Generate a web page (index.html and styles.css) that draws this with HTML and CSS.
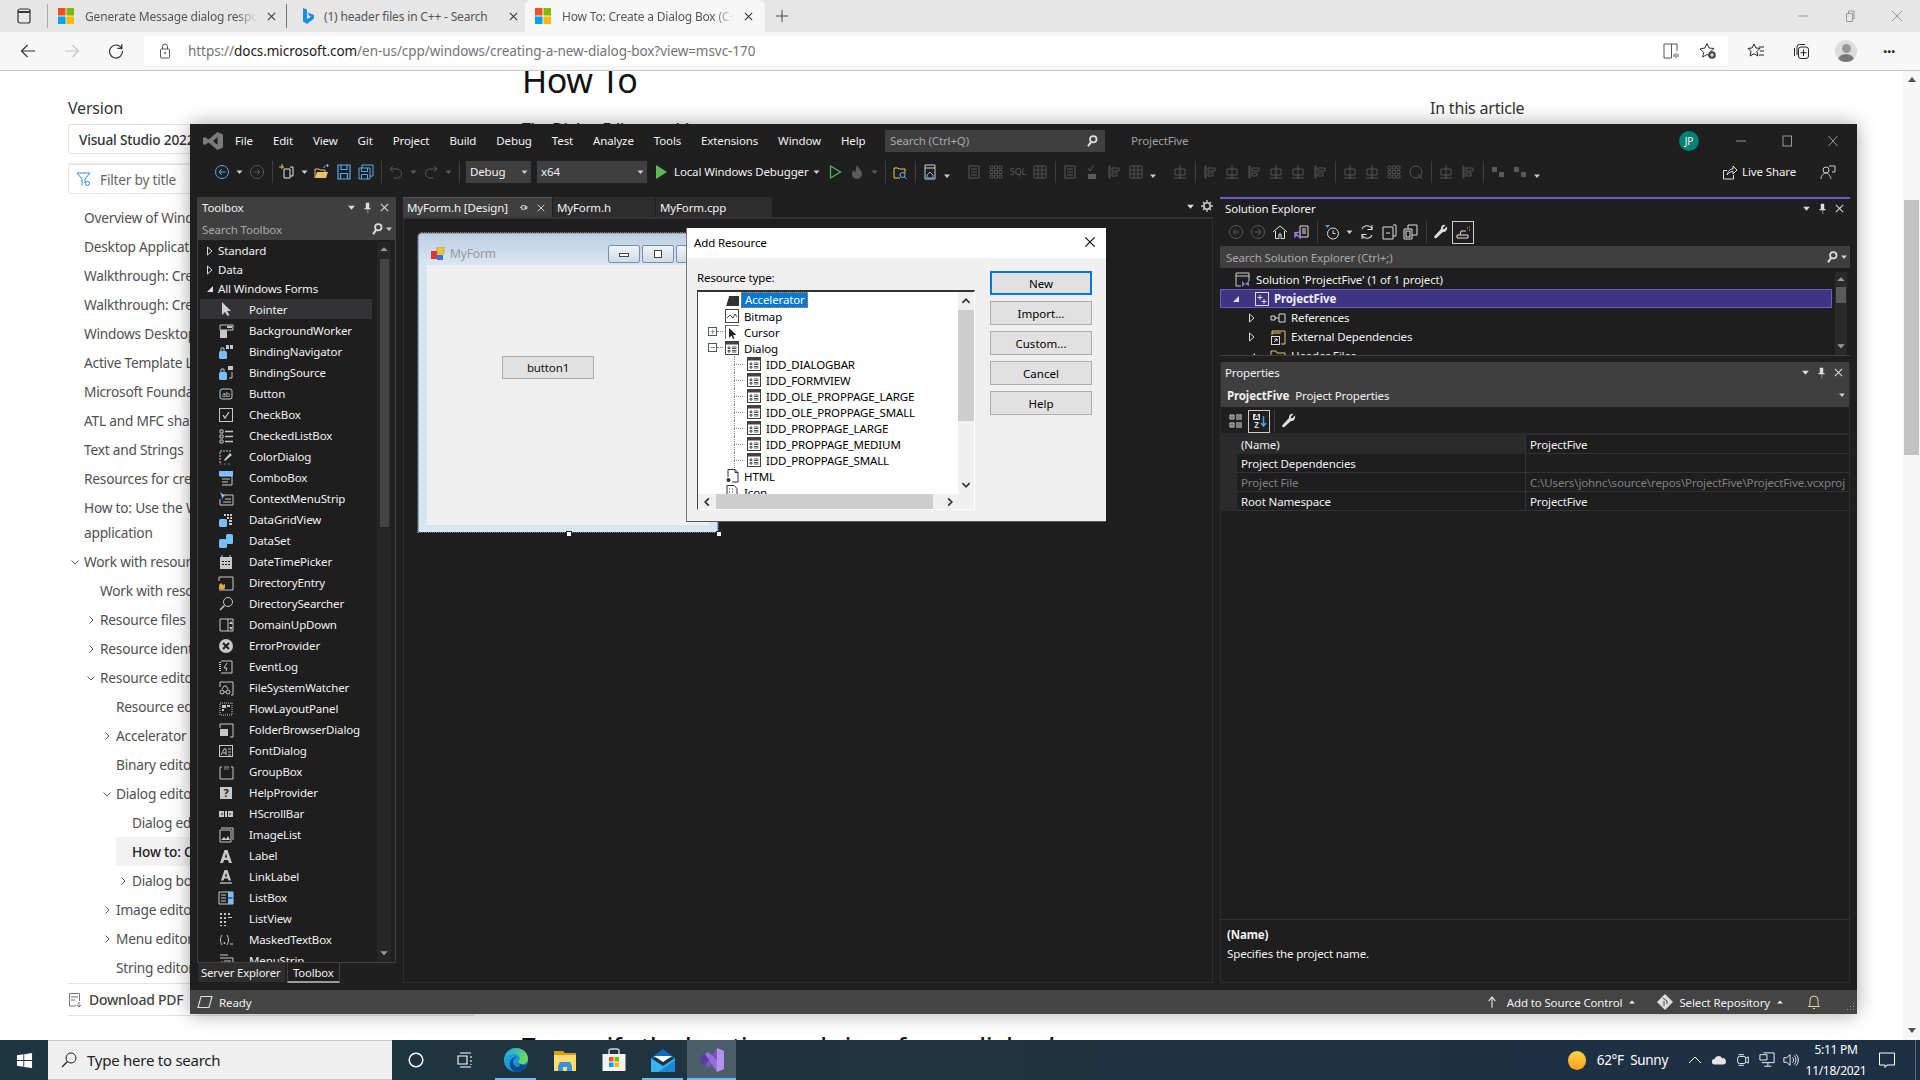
FILE: index.html
```html
<!DOCTYPE html>
<html lang="en">
<head>
<meta charset="utf-8">
<title>How To: Create a Dialog Box</title>
<link rel="stylesheet" href="styles.css">
</head>
<body>
<svg class="defs" width="0" height="0">
  <symbol id="ms" viewBox="0 0 16 16"><rect width="7.5" height="7.5" fill="#f25022"/><rect x="8.5" width="7.5" height="7.5" fill="#7fba00"/><rect y="8.5" width="7.5" height="7.5" fill="#00a4ef"/><rect x="8.5" y="8.5" width="7.5" height="7.5" fill="#ffb900"/></symbol>
  <symbol id="close" viewBox="0 0 12 12"><path d="M2 2l8 8M10 2l-8 8" fill="none" stroke="currentColor" stroke-width="1.1"/></symbol>
  <symbol id="chev-r" viewBox="0 0 10 10"><path d="M3.500 1.500L7 5 3.500 8.500" fill="none" stroke="#555" stroke-width="1"/></symbol>
  <symbol id="chev-d" viewBox="0 0 10 10"><path d="M1.500 3.500L5 7l3.500-3.500" fill="none" stroke="#555" stroke-width="1"/></symbol>
  <symbol id="caret" viewBox="0 0 8 8"><path d="M1 2.500h6L4 6z" fill="currentColor"/></symbol>
  <symbol id="caret-up" viewBox="0 0 8 8"><path d="M1 5.500h6L4 2.500z" fill="currentColor"/></symbol>
  <symbol id="find" viewBox="0 0 16 16"><circle cx="9.500" cy="6" r="3.700" fill="none" stroke="currentColor" stroke-width="2"/><path d="M7 9l-3.500 5" stroke="currentColor" stroke-width="2.400"/></symbol>
  <symbol id="pin" viewBox="0 0 10 14"><path d="M3 1h4v6h1.500v1.500h-2.700V13h-.6V8.500H1.500V7H3z" fill="currentColor"/></symbol>
  <symbol id="tri-r" viewBox="0 0 8 10"><path d="M1.500 1l4.500 4-4.500 4z" fill="none" stroke="currentColor"/></symbol>
  <symbol id="tri-o" viewBox="0 0 8 8"><path d="M7 1v6H1z" fill="currentColor"/></symbol>
  <symbol id="wrench" viewBox="0 0 16 16"><path d="M14 2.500l-3 3-1.500-1.500 3-3c-2.500-.7-5 1-4.500 4L2 11.500c-1 1-1 1.700-.5 2.300s1.500.6 2.200-.1L10 8c3 .5 4.700-2.500 4-5.500z" fill="currentColor"/></symbol>
  <symbol id="circ-l" viewBox="0 0 16 16"><circle cx="8" cy="8" r="6.500" fill="none" stroke="currentColor"/><path d="M11.500 8h-6M8 5L5 8l3 3" fill="none" stroke="currentColor"/></symbol>
  <symbol id="circ-r" viewBox="0 0 16 16"><circle cx="8" cy="8" r="6.500" fill="none" stroke="currentColor"/><path d="M4.500 8h6M8 5l3 3-3 3" fill="none" stroke="currentColor"/></symbol>
  <symbol id="dlg" viewBox="0 0 14 14"><rect x=".5" y=".5" width="13" height="13" fill="#fff" stroke="#424242"/><rect x="1" y="1" width="12" height="2.500" fill="#424242"/><path d="M3 6h2v1.500H3zM3 9.500h2V11H3zM7 6h4.500M7 7.500h4.500M7 9.500h4.500M7 11h4.500" fill="none" stroke="#424242" stroke-width=".9"/></symbol>
  <symbol id="dim" viewBox="0 0 16 16"><rect x="3" y="2" width="10" height="12" fill="none" stroke="currentColor"/><path d="M5 5h6M5 8h6M5 11h6" stroke="currentColor"/></symbol>
  <symbol id="dim2" viewBox="0 0 16 16"><path d="M3 2h1v12H3zM6 4h7v3H6zM6 9h5v3H6z" fill="none" stroke="currentColor" stroke-width=".9"/></symbol>
  <symbol id="dim3" viewBox="0 0 16 16"><path d="M8 1v14M3 5h10v6H3zM2 14h12" fill="none" stroke="currentColor" stroke-width=".9"/></symbol>
  <symbol id="dim4" viewBox="0 0 16 16"><path d="M2 3h5v5H2zM9 8h5v5H9z" fill="currentColor"/></symbol>
  <symbol id="grid9" viewBox="0 0 16 16"><path d="M2 2h3v3H2zM6.500 2h3v3h-3zM11 2h3v3h-3zM2 6.500h3v3H2zM6.500 6.500h3v3h-3zM11 6.500h3v3h-3zM2 11h3v3H2zM6.500 11h3v3h-3zM11 11h3v3h-3z" fill="none" stroke="currentColor" stroke-width=".8"/></symbol>
  <symbol id="table" viewBox="0 0 16 16"><path d="M2 2h12v12H2zM2 6h12M2 10h12M6 2v12M10 2v12" fill="none" stroke="currentColor" stroke-width=".9"/></symbol>
</svg>

<header class="tabstrip">
  <svg class="sb-ic" viewBox="0 0 16 18"><rect x="2" y="2" width="12" height="14" rx="2" fill="none" stroke="#333" stroke-width="1.200"/><path d="M2 5h12" stroke="#333" stroke-width="2"/></svg>
  <div class="tab t1"><svg class="fav"><use href="#ms"/></svg><span class="tab-t">Generate Message dialog respon</span><svg class="tab-x"><use href="#close"/></svg></div>
  <div class="tab t2"><svg class="fav" viewBox="0 0 16 16"><path d="M3 0l4 1.500v9.500l4-2.200-2-1L7.500 4.500 14 7v3.500L7 16l-4-2.500z" fill="#1d8fe1"/></svg><span class="tab-t">(1) header files in C++ - Search</span><svg class="tab-x"><use href="#close"/></svg></div>
  <div class="tab t3"><svg class="fav"><use href="#ms"/></svg><span class="tab-t">How To: Create a Dialog Box (C+</span><svg class="tab-x"><use href="#close"/></svg></div>
  <svg class="tab-new" viewBox="0 0 16 16"><path d="M8 1v14M1 8h14" stroke="#444" stroke-width="1.100"/></svg>
  <div class="wc">
    <svg class="wc-i" viewBox="0 0 12 12"><path d="M1 6h10" stroke="#999"/></svg>
    <svg class="wc-i" viewBox="0 0 12 12"><path d="M2.500 3.500h6v8h-6zM4.500 3.500V1h5.500v7.500H8.500" fill="none" stroke="#999"/></svg>
    <svg class="wc-i" viewBox="0 0 12 12"><path d="M1 1l10 10M11 1L1 11" stroke="#999"/></svg>
  </div>
</header>

<nav class="navbar">
  <svg class="nav-i" viewBox="0 0 16 16"><path d="M15 8H1.500M7.500 2l-6 6 6 6" fill="none" stroke="#333" stroke-width="1.200"/></svg>
  <svg class="nav-i" viewBox="0 0 16 16"><path d="M1 8h13.500M8.500 2l6 6-6 6" fill="none" stroke="#c4c4c4" stroke-width="1.200"/></svg>
  <svg class="nav-i" viewBox="0 0 16 16"><path d="M13.500 5A6.500 6.500 0 1 0 14.500 8M13.800 1v4.300H9.500" fill="none" stroke="#333" stroke-width="1.200"/></svg>
  <div class="addr">
    <svg class="lock" viewBox="0 0 12 16"><rect x="1.500" y="6" width="9" height="9" rx="1" fill="none" stroke="#555"/><path d="M3.500 6V3.500a2.500 2.500 0 0 1 5 0V6" fill="none" stroke="#555"/><circle cx="6" cy="10" r="1" fill="#555"/></svg>
    <span class="url"><span class="url-d">https://</span>docs.microsoft.com<span class="url-d">/en-us/cpp/windows/creating-a-new-dialog-box?view=msvc-170</span></span>
    <svg class="ab-i first" viewBox="0 0 18 18"><path d="M2 2h7.500v14H2zM9.500 2H15v7" fill="none" stroke="#555"/><path d="M12 12v3M14 11v5M16 12v3" stroke="#555"/></svg>
    <svg class="ab-i" viewBox="0 0 18 18"><path d="M8 1.500l2 4.500 5 .5-3.700 3.300 1 4.700L8 12.500 3.700 15l1-4.700L1 6.900 6 6z" fill="none" stroke="#333"/><circle cx="13" cy="13" r="3.800" fill="#444"/><path d="M13 11v4M11 13h4" stroke="#fff"/></svg>
  </div>
  <svg class="nav-r" viewBox="0 0 18 18"><path d="M7 2l2 4 4 .4-3 3 .9 4.600L7 11.700 3.100 14 4 9.400 1 6.400 5 6z" fill="none" stroke="#222"/><path d="M12 5h5M13 9h4M12 13h5" stroke="#222"/></svg>
  <svg class="nav-r" viewBox="0 0 18 18"><path d="M5 13V5a2.500 2.500 0 0 1 2.500-2.500H13M2.500 14V6" fill="none" stroke="#222"/><rect x="6.500" y="5" width="10" height="11.500" rx="2.500" fill="none" stroke="#222"/><path d="M11.500 7.500v6.500M8.500 10.700h6" stroke="#222"/></svg>
  <div class="avatar"><i class="av-h"></i><i class="av-b"></i></div>
  <span class="dots">···</span>
</nav>

<main class="page">
  <aside class="toc">
    <h3 class="toc-h">Version</h3>
    <div class="toc-box strong">Visual Studio 2022</div>
    <div class="toc-box filter"><svg class="filter-i" viewBox="0 0 16 16"><path d="M1 2h13L9 8v4M6 8L1 2M6 8v6.500" fill="none" stroke="#2b88d8"/><circle cx="11.500" cy="12.500" r="2" fill="none" stroke="#2b88d8"/></svg>Filter by title</div>
    <ul class="toc-list">
      <li class="l0">Overview of Windows programming in C++</li>
      <li class="l0">Desktop Applications (Visual C++)</li>
      <li class="l0">Walkthrough: Create a traditional Windows</li>
      <li class="l0">Walkthrough: Create a simple Windows app</li>
      <li class="l0">Windows Desktop Wizard</li>
      <li class="l0">Active Template Library (ATL)</li>
      <li class="l0">Microsoft Foundation Classes (MFC)</li>
      <li class="l0">ATL and MFC shared classes</li>
      <li class="l0">Text and Strings</li>
      <li class="l0">Resources for creating a game</li>
      <li class="l0 wrap">How to: Use the Windows 10 SDK in a Windows<br>application</li>
      <li class="l0"><svg class="cv"><use href="#chev-d"/></svg>Work with resource files</li>
      <li class="l1">Work with resource files</li>
      <li class="l1"><svg class="cv"><use href="#chev-r"/></svg>Resource files</li>
      <li class="l1"><svg class="cv"><use href="#chev-r"/></svg>Resource identifiers</li>
      <li class="l1"><svg class="cv"><use href="#chev-d"/></svg>Resource editors</li>
      <li class="l2">Resource editors</li>
      <li class="l2"><svg class="cv"><use href="#chev-r"/></svg>Accelerator editor</li>
      <li class="l2">Binary editor</li>
      <li class="l2"><svg class="cv"><use href="#chev-d"/></svg>Dialog editor</li>
      <li class="l3">Dialog editor</li>
      <li class="l3 cur">How to: Create a Dialog Box</li>
      <li class="l3"><svg class="cv"><use href="#chev-r"/></svg>Dialog box controls</li>
      <li class="l2"><svg class="cv"><use href="#chev-r"/></svg>Image editor</li>
      <li class="l2"><svg class="cv"><use href="#chev-r"/></svg>Menu editor</li>
      <li class="l2">String editor</li>
    </ul>
    <div class="pdf"><svg class="pdf-i" viewBox="0 0 14 16"><path d="M8 14H1.500V1.500h10V9M3 5h7M3 8h4M11 10v5M9 13l2 2 2-2" fill="none" stroke="#777"/></svg>Download PDF</div>
  </aside>
  <article class="content">
    <h1 class="title">How To</h1>
    <p class="lead">The Dialog Editor enables</p>
    <h2 class="sub">To specify the location and size of your dialog box</h2>
  </article>
  <aside class="rail">In this article</aside>
  <div class="pagebar">
    <svg class="pb-a" viewBox="0 0 8 8"><path d="M0 6h8L4 1z" fill="#505050"/></svg>
    <div class="pb-thumb"></div>
    <svg class="pb-a end" viewBox="0 0 8 8"><path d="M0 2h8L4 7z" fill="#505050"/></svg>
  </div>
</main>

<section class="vs">
  <div class="vs-title">
    <svg class="vs-logo" viewBox="0 0 20 20"><path d="M14.500 1L20 3.500v13L14.500 19 5.500 11.500 2 14l-2-1V7l2-1 3.500 2.500zM14.500 6l-4.500 4 4.500 4z" fill="#7a7a7a"/></svg>
    <ul class="menu"><li>File</li><li>Edit</li><li>View</li><li>Git</li><li>Project</li><li>Build</li><li>Debug</li><li>Test</li><li>Analyze</li><li>Tools</li><li>Extensions</li><li>Window</li><li>Help</li></ul>
    <div class="vs-search"><span>Search (Ctrl+Q)</span><svg class="find"><use href="#find"/></svg></div>
    <span class="vs-proj">ProjectFive</span>
    <span class="vs-av">JP</span>
    <svg class="vs-wc" viewBox="0 0 12 12"><path d="M1 6h10" stroke="#999"/></svg>
    <svg class="vs-wc" viewBox="0 0 12 12"><rect x="2" y="1" width="8.500" height="10" fill="none" stroke="#999"/></svg>
    <svg class="vs-wc" viewBox="0 0 12 12"><path d="M1.500 1l9 10M10.500 1l-9 10" stroke="#999"/></svg>
  </div>

  <div class="vs-tools">
    <i class="grip first"></i>
    <svg class="tb blue"><use href="#circ-l"/></svg><svg class="cr"><use href="#caret"/></svg><svg class="tb off"><use href="#circ-r"/></svg><i class="sep"></i>
    <svg class="tb" viewBox="0 0 16 16"><path d="M5 5h6v9H5zM11 3h3v9h-3" fill="none" stroke="#e6e6e6"/><path d="M3 0v5M0 3h5" stroke="#e8c56a"/></svg><svg class="cr"><use href="#caret"/></svg>
    <svg class="tb" viewBox="0 0 16 16"><path d="M1 14V5h4l1 1h5v2" fill="none" stroke="#e8c56a"/><path d="M1 14l2-6h11l-2 6z" fill="#e8c56a"/><path d="M10 4c0-2 2-3 4-2.500M13 0l1.500 1.500L13 3" fill="none" stroke="#6ab7ff"/></svg>
    <svg class="tb blue" viewBox="0 0 16 16"><path d="M2 1h12v14H2zM5 1v4.500h6V1M4.500 15V9.500h7V15" fill="none" stroke="currentColor" stroke-width="1.200"/></svg>
    <svg class="tb blue" viewBox="0 0 16 16"><path d="M1 4h11v11H1zM3.500 4v3.500h6V4M3.500 15v-4.500h6V15M4 4V1h11v11h-3" fill="none" stroke="currentColor"/></svg><i class="sep nar"></i>
    <svg class="tb off" viewBox="0 0 16 16"><path d="M5 2L2 5l3 3M2 5h7a4.500 4.500 0 0 1 0 9H6" fill="none" stroke="currentColor"/></svg><svg class="cr off"><use href="#caret"/></svg>
    <svg class="tb off" viewBox="0 0 16 16"><path d="M11 2l3 3-3 3M14 5H7a4.500 4.500 0 0 0 0 9h3" fill="none" stroke="currentColor"/></svg><svg class="cr off"><use href="#caret"/></svg><i class="sep"></i>
    <div class="combo c1"><span>Debug</span><svg class="cr"><use href="#caret"/></svg></div>
    <div class="combo c2"><span>x64</span><svg class="cr"><use href="#caret"/></svg></div>
    <svg class="tb play" viewBox="0 0 16 16"><path d="M3 1l11 7-11 7z" fill="#5db85c"/></svg>
    <span class="dbg">Local Windows Debugger</span><svg class="cr"><use href="#caret"/></svg>
    <svg class="tb hol" viewBox="0 0 16 16"><path d="M3.500 2l10 6-10 6z" fill="none" stroke="#5db85c" stroke-width="1.200"/></svg>
    <svg class="tb off" viewBox="0 0 16 16"><path d="M8 1c1 3 5 5 5 9a5 5 0 0 1-10 0c0-2 1-3 2-4 0 1 1 2 1.500 2C7 6 7 3 8 1z" fill="currentColor"/></svg><svg class="cr off"><use href="#caret"/></svg><i class="sep"></i>
    <svg class="tb" viewBox="0 0 16 16"><path d="M2 14V4h4l1 1h6v4M2 14h6" fill="none" stroke="#e8c56a"/><circle cx="10.500" cy="11" r="2.500" fill="none" stroke="#6ab7ff"/><path d="M12.500 13l2 2" stroke="#6ab7ff"/></svg><i class="sep"></i>
    <svg class="tb" viewBox="0 0 16 16"><path d="M3 1h10v14H3zM3 4h10" fill="none" stroke="#cfcfcf"/><path d="M5 11l3-3 3 3v3H5z" fill="none" stroke="#6ab7ff"/></svg><svg class="ov"><use href="#caret"/></svg>
    <i class="grip"></i>
    <svg class="tb off"><use href="#dim"/></svg><svg class="tb off"><use href="#grid9"/></svg><span class="tb-sql">SQL</span><svg class="tb off"><use href="#table"/></svg><i class="sep"></i>
    <svg class="tb off"><use href="#dim"/></svg><svg class="tb off" viewBox="0 0 16 16"><path d="M4 4l2 3 4-6" fill="none" stroke="currentColor"/><rect x="4" y="10" width="8" height="5" fill="currentColor"/></svg><svg class="tb off"><use href="#dim2"/></svg><svg class="tb off"><use href="#table"/></svg><svg class="ov"><use href="#caret"/></svg>
    <i class="grip"></i>
    <svg class="tb off"><use href="#dim3"/></svg><i class="sep"></i>
    <svg class="tb off"><use href="#dim2"/></svg><svg class="tb off"><use href="#dim3"/></svg><svg class="tb off"><use href="#dim2"/></svg><svg class="tb off"><use href="#dim3"/></svg><svg class="tb off"><use href="#dim3"/></svg><svg class="tb off"><use href="#dim2"/></svg><i class="sep"></i>
    <svg class="tb off"><use href="#dim3"/></svg><svg class="tb off"><use href="#dim3"/></svg><svg class="tb off"><use href="#grid9"/></svg><svg class="tb off" viewBox="0 0 16 16"><circle cx="8" cy="8" r="6" fill="none" stroke="currentColor"/><path d="M10 10l4 5" stroke="currentColor"/></svg><i class="sep"></i>
    <svg class="tb off"><use href="#dim3"/></svg><svg class="tb off"><use href="#dim2"/></svg><i class="sep"></i>
    <svg class="tb off"><use href="#dim4"/></svg><svg class="tb off"><use href="#dim4"/></svg><svg class="ov"><use href="#caret"/></svg>
    <div class="live"><svg class="live-i" viewBox="0 0 16 16"><path d="M1.500 6.500H5M1.500 6.500V15h10v-4M5 11c1-4 3-6 6-6V2l4 4-4 4V7.500c-3 0-4 1.500-6 3.500z" fill="none" stroke="#e0e0e0"/></svg><span>Live Share</span></div>
    <svg class="fb" viewBox="0 0 16 16"><circle cx="6" cy="6" r="3" fill="none" stroke="#ccc"/><path d="M1 15c0-4 3-6 5-6s4 2 5 6M9 2h6v6h-3" fill="none" stroke="#ccc"/></svg>
  </div>

  <div class="vs-body">
    <div class="col-left">
      <section class="toolbox">
        <div class="pane-h"><span>Toolbox</span><svg class="ph-c"><use href="#caret"/></svg><svg class="ph-p"><use href="#pin"/></svg><svg class="ph-x"><use href="#close"/></svg></div>
        <div class="pane-s"><span>Search Toolbox</span><svg class="find"><use href="#find"/></svg><svg class="cr"><use href="#caret"/></svg></div>
        <div class="tbx-body">
          <ul class="tbx-list">
            <li class="tbx-g"><svg class="g-tri"><use href="#tri-r"/></svg>Standard</li>
            <li class="tbx-g"><svg class="g-tri"><use href="#tri-r"/></svg>Data</li>
            <li class="tbx-g"><svg class="g-tri"><use href="#tri-o"/></svg>All Windows Forms</li>
            <li class="tbx-i on"><svg viewBox="0 0 16 16"><path d="M4 1v13l3-3 2.500 4 2-1-2.500-4h4z" fill="#d0d0d0"/></svg>Pointer</li>
            <li class="tbx-i"><svg viewBox="0 0 16 16"><path d="M2 2h13v5H2z" fill="none" stroke="#c8c8c8"/><path d="M2 7h7v8H2z" fill="#c8c8c8"/><path d="M9 4h5" stroke="#c8c8c8" stroke-width="2"/></svg>BackgroundWorker</li>
            <li class="tbx-i"><svg viewBox="0 0 16 16"><rect x="1" y="7" width="8" height="8" rx="1.500" fill="#75beff"/><path d="M3 7V4h3v3" fill="none" stroke="#c8c8c8"/><rect x="8" y="1" width="3" height="4" fill="#c8c8c8"/><rect x="12" y="1" width="3" height="4" fill="#c8c8c8"/></svg>BindingNavigator</li>
            <li class="tbx-i"><svg viewBox="0 0 16 16"><rect x="1" y="7" width="8" height="8" rx="1.500" fill="#75beff"/><path d="M3 7V4h3v3" fill="none" stroke="#c8c8c8"/><rect x="10" y="1" width="5" height="4" fill="#c8c8c8"/><path d="M14 7v6h-3" fill="none" stroke="#c8c8c8"/></svg>BindingSource</li>
            <li class="tbx-i"><svg viewBox="0 0 16 16"><rect x="2" y="3" width="12" height="10" rx="2" fill="none" stroke="#c8c8c8"/><text x="8" y="11" class="ic-t">ab</text></svg>Button</li>
            <li class="tbx-i"><svg viewBox="0 0 16 16"><rect x="1.500" y="1.500" width="13" height="13" fill="none" stroke="#c8c8c8"/><path d="M5 8l2 3 4-6" fill="none" stroke="#c8c8c8" stroke-width="1.300"/></svg>CheckBox</li>
            <li class="tbx-i"><svg viewBox="0 0 16 16"><path d="M2 2h3v3H2zM2 7h3v3H2zM2 12h3v3H2z" fill="none" stroke="#c8c8c8"/><path d="M7 3.500h8M7 8.500h8M7 13.500h8" stroke="#c8c8c8" stroke-width="1.400"/></svg>CheckedListBox</li>
            <li class="tbx-i"><svg viewBox="0 0 16 16"><path d="M2 14V2h12" fill="none" stroke="#c8c8c8" stroke-dasharray="2 1"/><path d="M6 11l6-7 2 2-7 6z" fill="#c8c8c8"/><path d="M2 15h2" stroke="#e44"/><path d="M6 15h2" stroke="#4a4"/><path d="M10 15h2" stroke="#48e"/></svg>ColorDialog</li>
            <li class="tbx-i"><svg viewBox="0 0 16 16"><rect x="1" y="1" width="14" height="5" fill="#75beff"/><path d="M2 6h12v9H4M4 9h8M4 12h6" fill="none" stroke="#c8c8c8"/></svg>ComboBox</li>
            <li class="tbx-i"><svg viewBox="0 0 16 16"><path d="M2 1l5 4-2 1 0 3z" fill="#75beff"/><path d="M4 4h11v10H2V8M7 8h6M5 11h8" fill="none" stroke="#c8c8c8"/></svg>ContextMenuStrip</li>
            <li class="tbx-i"><svg viewBox="0 0 16 16"><rect x="1" y="7" width="8" height="8" rx="1.500" fill="#75beff"/><path d="M6 2h2v2H6zM9 2h2v2H9zM12 2h2v2h-2zM9 5h2v2H9zM12 5h2v2h-2zM11 8h3v2h-3zM11 11h3v2h-3z" fill="#c8c8c8"/></svg>DataGridView</li>
            <li class="tbx-i"><svg viewBox="0 0 16 16"><rect x="1" y="6" width="8" height="9" rx="1.500" fill="#75beff"/><rect x="8" y="1" width="7" height="10" rx="1.500" fill="#75beff"/></svg>DataSet</li>
            <li class="tbx-i"><svg viewBox="0 0 16 16"><rect x="2" y="3" width="12" height="12" fill="#c8c8c8"/><path d="M4 1v3M12 1v3" stroke="#c8c8c8"/><path d="M4 7h2v1H4zM7 7h2v1H7zM10 7h2v1h-2zM4 10h2v1H4zM7 10h2v1H7zM10 10h2v1h-2z" fill="#1e1e1e"/></svg>DateTimePicker</li>
            <li class="tbx-i"><svg viewBox="0 0 16 16"><path d="M1 6V2h14v13H1" fill="none" stroke="#c8c8c8"/><path d="M1 10l2-2 2 2 2-1v4l-2 2-4-1z" fill="#e6a23c"/></svg>DirectoryEntry</li>
            <li class="tbx-i"><svg viewBox="0 0 16 16"><circle cx="10" cy="6" r="4.500" fill="none" stroke="#c8c8c8"/><path d="M6.500 9.500L2 14" stroke="#c8c8c8" stroke-width="1.500"/></svg>DirectorySearcher</li>
            <li class="tbx-i"><svg viewBox="0 0 16 16"><path d="M2 2h13v12H2zM10 2v12" fill="none" stroke="#c8c8c8"/><path d="M11 7l2-3 2 3zM11 10l2 3 2-3z" fill="#c8c8c8"/></svg>DomainUpDown</li>
            <li class="tbx-i"><svg viewBox="0 0 16 16"><circle cx="8" cy="8" r="7" fill="#c8c8c8"/><path d="M5 5l6 6M11 5l-6 6" stroke="#1e1e1e" stroke-width="2"/></svg>ErrorProvider</li>
            <li class="tbx-i"><svg viewBox="0 0 16 16"><path d="M3 2h11v12H3" fill="none" stroke="#c8c8c8"/><path d="M2 3v10" stroke="#c8c8c8" stroke-width="2" stroke-dasharray="1 1"/><path d="M9 4L6 9h3l-1 3" fill="none" stroke="#c8c8c8"/></svg>EventLog</li>
            <li class="tbx-i"><svg viewBox="0 0 16 16"><path d="M2 7V2h13v13h-2" fill="none" stroke="#c8c8c8"/><circle cx="4" cy="12" r="2" fill="none" stroke="#c8c8c8"/><circle cx="10" cy="12" r="2" fill="none" stroke="#c8c8c8"/><path d="M6 12h2M4 9l2-3h2l2 3" fill="none" stroke="#c8c8c8"/></svg>FileSystemWatcher</li>
            <li class="tbx-i"><svg viewBox="0 0 16 16"><rect x="2" y="2" width="12" height="12" fill="none" stroke="#c8c8c8" stroke-dasharray="1 1"/><path d="M4 4h4v3H4zM9 4h3v2H9zM4 8h2v2H4z" fill="#c8c8c8"/></svg>FlowLayoutPanel</li>
            <li class="tbx-i"><svg viewBox="0 0 16 16"><path d="M2 6V2h13v13h-3" fill="none" stroke="#c8c8c8"/><path d="M2 7h8v7H2z" fill="#c8c8c8"/></svg>FolderBrowserDialog</li>
            <li class="tbx-i"><svg viewBox="0 0 16 16"><rect x="1.500" y="2.500" width="13" height="11" fill="none" stroke="#c8c8c8"/><path d="M3 12l3-6h2v6M5 10h3M10 6h3M10 9h3M10 12h3" fill="none" stroke="#c8c8c8"/></svg>FontDialog</li>
            <li class="tbx-i"><svg viewBox="0 0 16 16"><path d="M4 3H2v12h13V3h-2" fill="none" stroke="#c8c8c8"/><text x="8.500" y="6" class="ic-t sm">XY</text></svg>GroupBox</li>
            <li class="tbx-i"><svg viewBox="0 0 16 16"><rect x="2" y="2" width="12" height="12" fill="#c8c8c8"/><text x="8" y="12" class="ic-t dk">?</text></svg>HelpProvider</li>
            <li class="tbx-i"><svg viewBox="0 0 16 16"><path d="M1 5h5v6H1zM7 5h2v6H7zM10 5h5v6h-5z" fill="#c8c8c8"/><path d="M4.500 6.500L3 8l1.500 1.500zM11.500 6.500L13 8l-1.500 1.500z" fill="#1e1e1e"/></svg>HScrollBar</li>
            <li class="tbx-i"><svg viewBox="0 0 16 16"><path d="M3 1h12v12M2 3h11v12H2z" fill="none" stroke="#c8c8c8"/><path d="M3 13l3-3 2 2 2-3 2 4z" fill="#c8c8c8"/></svg>ImageList</li>
            <li class="tbx-i"><svg viewBox="0 0 16 16"><path d="M6.500 2h3L14 15h-3l-1-3H6l-1 3H2zM6.800 9.500h2.400L8 5.500z" fill="#c8c8c8"/></svg>Label</li>
            <li class="tbx-i"><svg viewBox="0 0 16 16"><path d="M6.500 1h3L13 11.500h-2.500l-.7-2H6.200l-.7 2H3zM6.800 7.500h2.400L8 4z" fill="#c8c8c8"/><path d="M2 14h12" stroke="#c8c8c8" stroke-width="1.300"/></svg>LinkLabel</li>
            <li class="tbx-i"><svg viewBox="0 0 16 16"><path d="M1 2h14v12H1zM3 5h5M3 8h5M3 11h5" fill="none" stroke="#c8c8c8"/><rect x="10" y="2" width="5" height="5.500" fill="#75beff"/><rect x="10" y="8.500" width="5" height="5.500" fill="#75beff"/></svg>ListBox</li>
            <li class="tbx-i"><svg viewBox="0 0 16 16"><path d="M2 2h2v2H2zM6 2h2v2H6zM10 2h2v2h-2zM2 6h2v2H2zM6 6h2v2H6zM10 6h4v1h-4zM2 10h2v2H2zM6 10h2v2H6zM2 14h2v1H2zM6 14h2v1H6z" fill="#c8c8c8"/></svg>ListView</li>
            <li class="tbx-i"><svg viewBox="0 0 16 16"><path d="M4 3C2 6 2 10 4 13M9 3c2 3 2 7 0 10" fill="none" stroke="#c8c8c8"/><circle cx="6.500" cy="11" r="1" fill="#c8c8c8"/><path d="M12 12h3" stroke="#c8c8c8"/></svg>MaskedTextBox</li>
            <li class="tbx-i"><svg viewBox="0 0 16 16"><path d="M2 2h8M2 5h13v10H4V8M6 8h7" fill="none" stroke="#c8c8c8"/></svg>MenuStrip</li>
          </ul>
          <div class="tbx-sb"><svg class="sb-a"><use href="#caret-up"/></svg><div class="sb-thumb t-toolbox"></div><svg class="sb-a end"><use href="#caret"/></svg></div>
        </div>
      </section>
      <div class="btabs"><span class="btab b-s">Server Explorer</span><span class="btab on">Toolbox</span></div>
    </div>

    <section class="editor">
      <div class="ed-tabs">
        <div class="ed-tab on"><span>MyForm.h [Design]</span><svg class="tp" viewBox="0 0 10 10"><path d="M1 5h2M3 3h4v4H3zM7 4h2v2H7z" fill="none" stroke="#ddd"/></svg><svg class="tx"><use href="#close"/></svg></div>
        <div class="ed-tab t-h"><span>MyForm.h</span></div>
        <div class="ed-tab t-c"><span>MyForm.cpp</span></div>
        <svg class="ed-c"><use href="#caret"/></svg>
        <svg class="ed-g" viewBox="0 0 12 12"><circle cx="6" cy="6" r="3.200" fill="none" stroke="#ccc" stroke-width="1.600" /><path d="M6 0v2.500M6 9.500V12M0 6h2.500M9.500 6H12M2 2l1.500 1.500M8.500 8.500L10 10M10 2L8.500 3.500M3.500 8.500L2 10" stroke="#ccc" stroke-width="1.300"/></svg>
      </div>
      <div class="ed-doc">
        <div class="form">
          <div class="form-title">
            <svg class="form-ic" viewBox="0 0 14 14"><rect x="0" y="4" width="6" height="8" fill="#d33"/><rect x="6" y="0" width="7" height="7" fill="#f4c430" stroke="#a80" stroke-width=".5"/><rect x="6" y="8" width="6" height="5" fill="#3a6fd8"/></svg>
            <span>MyForm</span>
            <div class="f-btn"><i class="f-min"></i></div><div class="f-btn"><i class="f-max"></i></div><div class="f-btn"></div>
          </div>
          <div class="form-client"><div class="f-button">button1</div></div>
          <i class="handle h1"></i><i class="handle h2"></i>
        </div>
      </div>
    </section>

    <div class="col-right">
      <section class="sol">
        <div class="sol-h"><span>Solution Explorer</span><i class="dots-grip"></i><svg class="ph-c"><use href="#caret"/></svg><svg class="ph-p"><use href="#pin"/></svg><svg class="ph-x bold"><use href="#close"/></svg></div>
        <div class="sol-t">
          <svg class="st off"><use href="#circ-l"/></svg><svg class="st off"><use href="#circ-r"/></svg>
          <svg class="st" viewBox="0 0 16 16"><path d="M1 8l7-6 7 6M3.500 7v7.500H7V10h2v4.500h3.500V7" fill="none" stroke="#ddd"/></svg>
          <svg class="st" viewBox="0 0 16 16"><path d="M6 2h8v11H6z" fill="#222" stroke="#ddd"/><path d="M8 5h4M8 7h4M8 9h4" stroke="#ddd"/><path d="M1 9l2 2-2 2zM1 9l5 5V8z" fill="none" stroke="#9b7be0" stroke-width="1.300"/></svg>
          <i class="sep tight"></i>
          <svg class="st" viewBox="0 0 16 16"><circle cx="9" cy="9.500" r="5.500" fill="none" stroke="#ddd"/><path d="M9 6.500v3h2.500" fill="none" stroke="#ddd"/><path d="M1 1h5L3.500 4z" fill="#4aa3e0"/></svg><svg class="cr"><use href="#caret"/></svg>
          <svg class="st" viewBox="0 0 16 16"><path d="M13 5a5.500 5.500 0 0 0-10 0M3 11a5.500 5.500 0 0 0 10 0M13 1v4.500H8.500M3 15v-4.500h4.500" fill="none" stroke="#ddd" stroke-width="1.100"/></svg>
          <svg class="st" viewBox="0 0 16 16"><path d="M2 3h10v12H2zM5 9h4M12 1h3v11h-3" fill="none" stroke="#ddd"/></svg>
          <svg class="st" viewBox="0 0 16 16"><path d="M1 5h8v10H1zM5 5V1h9v10H9" fill="none" stroke="#ddd"/><rect x="3" y="7" width="4" height="6" fill="none" stroke="#ddd"/></svg>
          <i class="sep tight"></i>
          <svg class="st"><use href="#wrench"/></svg>
          <div class="st-on"><svg viewBox="0 0 16 16"><path d="M2 11h11v3H2zM5 11l1-4h5" fill="none" stroke="#ddd"/><path d="M14 3h1M14 6h1M12 4h1" stroke="#e8c56a"/></svg></div>
        </div>
        <div class="pane-s wide"><span>Search Solution Explorer (Ctrl+;)</span><svg class="find"><use href="#find"/></svg><svg class="cr"><use href="#caret"/></svg></div>
        <div class="sol-body">
          <ul class="tree">
            <li class="tr r0"><svg viewBox="0 0 16 16"><path d="M1 1h13v3H1zM1 4v10h5M14 4v5" fill="none" stroke="#ccc"/><path d="M7 9l3 3 4-3v5l-4-2-3 3z" fill="#9b7be0"/></svg>Solution 'ProjectFive' (1 of 1 project)</li>
            <li class="tr r1"><svg class="tri"><use href="#tri-o"/></svg><svg viewBox="0 0 16 16"><rect x="1.500" y="1.500" width="13" height="13" fill="none" stroke="#ddd"/><path d="M6 4v5M3.500 6.500h5M10 8v5M7.500 10.500h5" stroke="#ddd"/></svg><b>ProjectFive</b></li>
            <li class="tr r2"><svg class="tri"><use href="#tri-r"/></svg><svg viewBox="0 0 16 16"><path d="M1 6h4v4H1zM9 4h6v8H9zM5 8h4" fill="none" stroke="#ddd"/></svg>References</li>
            <li class="tr r2"><svg class="tri"><use href="#tri-r"/></svg><svg viewBox="0 0 16 16"><path d="M2 6V2h13v13h-4M2 4h9" fill="none" stroke="#e8c56a"/><rect x="1.500" y="7.500" width="8" height="8" fill="none" stroke="#ddd"/><path d="M4 13l3-3M4.500 10H7v2.500" fill="none" stroke="#ddd"/></svg>External Dependencies</li>
            <li class="tr r2"><svg class="tri"><use href="#tri-o"/></svg><svg viewBox="0 0 16 16"><path d="M1 14V3h5l1 2h8v9z" fill="none" stroke="#e8c56a"/></svg>Header Files</li>
          </ul>
          <div class="tbx-sb small"><svg class="sb-a"><use href="#caret-up"/></svg><div class="sb-thumb t-sol"></div><svg class="sb-a end"><use href="#caret"/></svg></div>
        </div>
      </section>
      <section class="props">
        <div class="pane-h"><span>Properties</span><svg class="ph-c"><use href="#caret"/></svg><svg class="ph-p"><use href="#pin"/></svg><svg class="ph-x"><use href="#close"/></svg></div>
        <div class="pr-subj"><b>ProjectFive</b><span>Project Properties</span><svg class="cr"><use href="#caret"/></svg></div>
        <div class="pr-t">
          <svg class="st" viewBox="0 0 16 16"><path d="M2 2h4v4H2zM2 10h4v4H2zM8 2h6M8 4h6M8 6h6M8 10h6M8 12h6M8 14h6" fill="none" stroke="#ddd"/><path d="M3 4h2M3 12h2" stroke="#ddd"/></svg>
          <div class="st-on pr"><svg viewBox="0 0 16 16"><rect x="2" y="1" width="7" height="6" fill="#ddd"/><text x="5.500" y="6" class="ic-t dk2">A</text><text x="5.500" y="14.500" class="ic-t lt2">Z</text><path d="M12.500 3v10M10 10l2.500 3 2.500-3" fill="none" stroke="#4aa3e0" stroke-width="1.500"/></svg></div>
          <i class="sep tight"></i>
          <svg class="st"><use href="#wrench"/></svg>
        </div>
        <div class="pr-grid">
          <div class="pr-cell n sel">(Name)</div><div class="pr-cell v">ProjectFive</div>
          <div class="pr-cell n">Project Dependencies</div><div class="pr-cell v"></div>
          <div class="pr-cell n dis">Project File</div><div class="pr-cell v dis">C:\Users\johnc\source\repos\ProjectFive\ProjectFive.vcxproj</div>
          <div class="pr-cell n">Root Namespace</div><div class="pr-cell v">ProjectFive</div>
        </div>
        <div class="pr-desc"><b>(Name)</b><span>Specifies the project name.</span></div>
      </section>
    </div>
  </div>

  <div class="vs-status">
    <svg class="ready-i" viewBox="0 0 16 14"><path d="M4 1.500h11l-3 11H1z" fill="none" stroke="#e0e0e0" stroke-width="1.100"/></svg>
    <span>Ready</span>
    <div class="st-r">
      <svg class="st-up" viewBox="0 0 12 16"><path d="M6 15V3M2 7l4-5 4 5" fill="none" stroke="#ddd" stroke-width="1.400"/></svg>
      <span class="st-t1">Add to Source Control</span><svg class="cr"><use href="#caret-up"/></svg>
      <svg class="st-git" viewBox="0 0 16 16"><path d="M8 0l8 8-8 8-8-8z" fill="#ddd"/><path d="M6 4l4 3M7 7v5M10 7v3" stroke="#444"/></svg>
      <span class="st-t2">Select Repository</span><svg class="cr"><use href="#caret-up"/></svg>
      <svg class="st-bell" viewBox="0 0 14 16"><path d="M1.500 12.500c1-1 1.500-2 1.500-4V6a4 4 0 0 1 8 0v2.500c0 2 .5 3 1.500 4zM6 14.500h2" fill="none" stroke="#e6d9a0"/></svg>
      <svg class="st-grip" viewBox="0 0 10 10"><path d="M8 2h1v1H8zM5 5h1v1H5zM8 5h1v1H8zM2 8h1v1H2zM5 8h1v1H5zM8 8h1v1H8z" fill="#999"/></svg>
    </div>
  </div>

  <div class="dialog">
    <div class="dlg-title"><span>Add Resource</span><svg class="dlg-x"><use href="#close"/></svg></div>
    <div class="dlg-body">
      <div class="dlg-left">
        <label class="dlg-label">Resource type:</label>
        <div class="dlg-tree">
          <ul class="rt">
            <li class="rt-r"><svg class="ri" viewBox="0 0 14 14"><path d="M1 13l3-10h10v10z" fill="#333"/><path d="M0 5h4M0 8h3M0 11h2" stroke="#fff"/></svg><span class="rt-sel">Accelerator</span></li>
            <li class="rt-r"><svg class="ri" viewBox="0 0 14 14"><rect x=".5" y=".5" width="13" height="13" fill="#fff" stroke="#424242"/><path d="M2 9l3-3 3 3 2-4 2 3" fill="none" stroke="#424242"/></svg><span>Bitmap</span></li>
            <li class="rt-r"><i class="plus p">+</i><svg class="ri" viewBox="0 0 14 14"><path d="M0 14V0h14" fill="none" stroke="#424242" stroke-width="1.500"/><path d="M4 3v10l2.500-2.500L8 14l1.500-.5L8 10h3.500z" fill="#222"/></svg><span>Cursor</span></li>
            <li class="rt-r"><i class="plus m">−</i><svg class="ri"><use href="#dlg"/></svg><span>Dialog</span></li>
            <li class="rt-c"><svg class="ri"><use href="#dlg"/></svg><span>IDD_DIALOGBAR</span></li>
            <li class="rt-c"><svg class="ri"><use href="#dlg"/></svg><span>IDD_FORMVIEW</span></li>
            <li class="rt-c"><svg class="ri"><use href="#dlg"/></svg><span>IDD_OLE_PROPPAGE_LARGE</span></li>
            <li class="rt-c"><svg class="ri"><use href="#dlg"/></svg><span>IDD_OLE_PROPPAGE_SMALL</span></li>
            <li class="rt-c"><svg class="ri"><use href="#dlg"/></svg><span>IDD_PROPPAGE_LARGE</span></li>
            <li class="rt-c"><svg class="ri"><use href="#dlg"/></svg><span>IDD_PROPPAGE_MEDIUM</span></li>
            <li class="rt-c"><svg class="ri"><use href="#dlg"/></svg><span>IDD_PROPPAGE_SMALL</span></li>
            <li class="rt-r"><svg class="ri" viewBox="0 0 14 14"><path d="M3 8V.5h7l3 3V13H7M10 .5v3h3" fill="none" stroke="#333"/><circle cx="3.500" cy="11" r="2" fill="#333"/></svg><span>HTML</span></li>
            <li class="rt-r"><svg class="ri" viewBox="0 0 14 14"><path d="M2 .5h7l3 3V13H2zM4 4h1M7 4h1M4 7h1M7 7h1" fill="none" stroke="#333"/></svg><span>Icon</span></li>
          </ul>
          <div class="rt-v"><svg viewBox="0 0 10 10"><path d="M2 6.500L5 3.500l3 3" fill="none" stroke="#333" stroke-width="1.400"/></svg><div class="rt-vt"></div><svg viewBox="0 0 10 10" class="end"><path d="M2 3.500L5 6.500l3-3" fill="none" stroke="#333" stroke-width="1.400"/></svg></div>
          <div class="rt-h"><svg viewBox="0 0 10 10"><path d="M6.500 2L3.500 5l3 3" fill="none" stroke="#333" stroke-width="1.400"/></svg><div class="rt-ht"></div><svg viewBox="0 0 10 10"><path d="M3.500 2l3 3-3 3" fill="none" stroke="#333" stroke-width="1.400"/></svg></div>
        </div>
      </div>
      <div class="dlg-btns">
        <button class="dbtn def">New</button>
        <button class="dbtn">Import...</button>
        <button class="dbtn">Custom...</button>
        <button class="dbtn">Cancel</button>
        <button class="dbtn">Help</button>
      </div>
    </div>
  </div>
</section>

<footer class="taskbar">
  <svg class="win" viewBox="0 0 18 18"><path d="M1 3.500l6.800-1v6H1zM8.700 2.300L17 1v7.500H8.700zM1 9.500h6.800v6l-6.800-1zM8.700 9.500H17V17l-8.300-1.200z" fill="#fff"/></svg>
  <div class="tk-search"><svg class="tk-s" viewBox="0 0 18 18"><circle cx="11" cy="7" r="5" fill="none" stroke="#222"/><path d="M7.500 10.500L2 16" stroke="#222" stroke-width="1.200"/></svg><span>Type here to search</span></div>
  <svg class="tk-i ring" viewBox="0 0 18 18"><circle cx="9" cy="9" r="6.800" fill="none" stroke="#fff" stroke-width="1.500"/></svg>
  <svg class="tk-i view" viewBox="0 0 18 18"><path d="M3 5h9v8H3zM5 2h11M5 16h11M16 5v2M16 9v2M16 13v1" fill="none" stroke="#fff" stroke-width="1.100"/></svg>
  <div class="tk-app run"><svg viewBox="0 0 26 26"><defs><linearGradient id="eg" x1="0" y1="0" x2="1" y2="1"><stop offset="0" stop-color="#1fb6e8"/><stop offset="1" stop-color="#1378c8"/></linearGradient><linearGradient id="eg2" x1="0" y1="0" x2="1" y2=".6"><stop offset="0" stop-color="#1fa9d8"/><stop offset="1" stop-color="#6fdc5a"/></linearGradient></defs><circle cx="13" cy="13" r="12" fill="url(#eg)"/><path d="M16 15c1 3 4 4 8 2-2 5-6 8-11 8-4-1-7-5-6-10 1-4 5-6 8-5-3 0-5 2-5 5 0 3 3 5 5 5 2 0 2-2 1-5z" fill="#0c4a92"/><path d="M2 10C4 4 8 1 13 1c7 0 12 5 12 11 0 3-3 5-6 5-2 0-4-1-4-3 2-1 2-3 1-5-3-4-10-3-14 1z" fill="url(#eg2)"/></svg></div>
  <div class="tk-app"><svg viewBox="0 0 26 26"><path d="M2 4h9l2 2h11v18H2z" fill="#d99a1c"/><path d="M2 8h22v16H2z" fill="#ffdc6e"/><path d="M6 24v-5l2-4h10l2 4v5h-5v-4h-4v4z" fill="#3f8fdc"/></svg></div>
  <div class="tk-app"><svg viewBox="0 0 26 26"><path d="M8 8V4a2 2 0 0 1 2-2h6a2 2 0 0 1 2 2v4" fill="none" stroke="#cfcfcf" stroke-width="1.500"/><rect x="1.500" y="7" width="23" height="17" fill="#f2f2f2"/><rect x="8" y="10" width="4.500" height="4.500" fill="#f25022"/><rect x="13.500" y="10" width="4.500" height="4.500" fill="#7fba00"/><rect x="8" y="15.500" width="4.500" height="4.500" fill="#00a4ef"/><rect x="13.500" y="15.500" width="4.500" height="4.500" fill="#ffb900"/></svg></div>
  <div class="tk-app run"><svg viewBox="0 0 26 26"><path d="M13 2L1 11h24z" fill="#0f6cbd"/><path d="M4 9h18l-9 6z" fill="#fff"/><path d="M1 11l12 8 12-8v14H1z" fill="#37b5ef"/><path d="M25 13v12H8z" fill="#1f86d6"/></svg></div>
  <div class="tk-app run act"><svg viewBox="0 0 26 26"><path d="M2 9l4-2 5 5-5 6-4-2z" fill="#5c3a9e"/><path d="M18 1L6 18l3 3 9-8z" fill="#7a55bd"/><path d="M6 7l3-2 9 8v12z" fill="#9470d8"/><path d="M18 1l7 3v18l-7 3z" fill="#b791f0"/></svg></div>
  <div class="tray">
    <i class="sun"></i>
    <span class="wx">62°F&nbsp;&nbsp;Sunny</span>
    <svg class="tr-i first" viewBox="0 0 16 16"><path d="M2 11l6-6 6 6" fill="none" stroke="#fff"/></svg>
    <svg class="tr-i" viewBox="0 0 18 18"><path d="M4 14a3 3 0 0 1 0-6 4.500 4.500 0 0 1 8.500-1A3.500 3.500 0 0 1 14 14z" fill="#e5e5e5"/></svg>
    <svg class="tr-i" viewBox="0 0 16 18"><rect x="2" y="5" width="9" height="8" rx="2" fill="none" stroke="#fff"/><path d="M11 7l3-1.500v7L11 11M3 3h6M3 15h6" fill="none" stroke="#fff"/></svg>
    <svg class="tr-i" viewBox="0 0 18 18"><path d="M5 1h12v11H3M3 3h6v6H1V3zM10 12v4M6 16h8" fill="none" stroke="#fff"/></svg>
    <svg class="tr-i" viewBox="0 0 18 18"><path d="M1 6.500h3L8 3v12l-4-3.500H1zM10.500 6a4 4 0 0 1 0 6M12.500 4a7 7 0 0 1 0 10M14.500 2.500a9 9 0 0 1 0 13" fill="none" stroke="#fff"/></svg>
    <div class="clock"><span>5:11 PM</span><span>11/18/2021</span></div>
    <svg class="note" viewBox="0 0 18 18"><path d="M1.500 2h15v12H9l-2 2.500V14H1.500z" fill="none" stroke="#fff"/></svg>
    <i class="peek"></i>
  </div>
</footer>
</body>
</html>
```
FILE: styles.css
```css
*{box-sizing:border-box}
html,body{margin:0;padding:0}
body{width:1920px;height:1080px;overflow:hidden;position:relative;display:flex;flex-direction:column;font-family:"Noto Sans","Liberation Sans",sans-serif;background:#fff;color:#222}
ul{list-style:none;margin:0;padding:0}
.defs{position:absolute}
svg{display:block;flex:none}

/* browser tab strip */
.tabstrip{height:32px;background:#e6e6e6;display:flex;align-items:center;flex:none}
.sb-ic{width:16px;height:18px;margin-left:16px;margin-right:15px}
.tab{height:32px;display:flex;align-items:center;font-size:12px;letter-spacing:-.18px;color:#555;border-left:1px solid #999;background-clip:content-box}
.t1{width:239px;padding-left:10px;border-left:1px solid #aaa;height:24px}
.t2{width:239px;padding-left:13px;border-left:1px solid #777;height:24px}
.t3{width:240px;padding-left:10px;background:#f7f7f7;border:0;border-radius:6px 6px 0 0;color:#555}
.fav{width:16px;height:16px;margin-right:11px}
.t2 .fav{margin-right:8px}
.tab-t{white-space:nowrap;overflow:hidden;width:172px;-webkit-mask-image:linear-gradient(90deg,#000 88%,transparent)}
.t2 .tab-t{width:175px;-webkit-mask-image:none}
.tab-x{width:11px;height:11px;margin-left:9px;color:#333}
.tab-new{width:14px;height:14px;margin-left:10px}
.wc{margin-left:auto;display:flex;align-items:center;gap:35px;padding-right:17px}
.wc-i{width:12px;height:12px}

/* nav bar */
.navbar{height:39px;background:#f7f7f7;border-bottom:1px solid #c8c8c8;display:flex;align-items:center;flex:none;padding-left:20px;padding-bottom:1px}
.nav-i{width:16px;height:16px;margin-right:28px}
.addr{width:1584px;height:30px;margin-left:-8px;background:#fff;border-radius:4px;display:flex;align-items:center;padding-left:15px;flex:none}
.lock{width:12px;height:16px;margin-right:17px}
.url{font-size:13.500px;color:#1a1a1a;white-space:nowrap;letter-spacing:-.06px}
.url-d{color:#747474}
.ab-i{width:18px;height:18px;margin-left:19px}
.ab-i.first{margin-left:auto}
.ab-i:last-child{margin-right:11px}
.nav-r{width:18px;height:18px;margin-left:19px}
.nav-r + .nav-r{margin-left:27px}
.avatar{width:22px;height:22px;border-radius:50%;background:#ddd;position:relative;margin-left:25px;overflow:hidden;flex:none}
.av-h{position:absolute;left:7px;top:4px;width:9px;height:9px;border-radius:50%;background:#999}
.av-b{position:absolute;left:3px;top:14px;width:16px;height:12px;border-radius:50%;background:#777}
.dots{font-size:16px;font-weight:700;margin-left:26px;letter-spacing:-.5px;color:#222}

/* docs page */
.page{flex:1;position:relative;display:flex;min-height:0;overflow:hidden}
.toc{width:474px;margin-left:68px;margin-right:-20px;flex:none;padding-top:27px;font-size:13.700px;letter-spacing:-.22px;color:#505050}
.toc-h{margin:0 0 6px;font-size:16px;font-weight:400;color:#333;line-height:20px;letter-spacing:-.2px}
.toc-box{height:30px;border:1px solid #e3e3e3;border-radius:2px;display:flex;align-items:center;padding-left:10px;margin-bottom:10px;width:406px;color:#333}
.strong{font-weight:500}
.filter{padding-left:7px;color:#666;box-shadow:0 -1px 0 #eee}
.filter-i{width:16px;height:16px;margin-right:8px}
.toc-list{margin-top:-1px}
.toc-list li{height:29px;line-height:29px;white-space:nowrap;position:relative;width:406px;overflow:hidden}
.toc-list li.wrap{height:54px;line-height:25px;padding-top:2px}
.l0{padding-left:16px}
.l1{padding-left:32px}
.l2{padding-left:48px}
.l3{padding-left:64px}
.cv{position:absolute;width:10px;height:10px;top:10px}
.l0 .cv{left:2px}
.l1 .cv{left:18px}
.l2 .cv{left:34px}
.l3 .cv{left:50px}
.toc-list li.cur{background:#f2f2f2;color:#222;font-weight:500;margin-left:48px;padding-left:16px;width:358px}
.pdf{border-top:1px solid #e3e3e3;border-bottom:1px solid #e3e3e3;height:33px;width:406px;margin-top:1px;display:flex;align-items:center;font-weight:500;color:#444;font-size:14px;letter-spacing:-.25px}
.pdf-i{width:14px;height:16px;margin-right:7px}
.content{width:908px;flex:none;display:flex;flex-direction:column}
.title{font-size:34px;font-weight:400;line-height:40px;margin:-11px 0 0;color:#111;letter-spacing:-.4px}
.lead{margin:17px 0 0;font-size:16px;line-height:24px;font-weight:500;color:#222;letter-spacing:-.5px}
.sub{margin:auto 0 -24px;font-size:24px;line-height:36px;font-weight:500;color:#111}
.rail{font-size:16px;line-height:20px;padding-top:27px;color:#333;letter-spacing:-.2px;flex:1}
.pagebar{position:absolute;right:0;top:0;bottom:0;width:17px;background:#f7f7f7;display:flex;flex-direction:column;align-items:center}
.pb-a{width:8px;height:8px;margin-top:5px}
.pb-thumb{width:15px;height:255px;background:#c2c2c2;margin-top:116px}
.pb-a.end{margin-top:auto;margin-bottom:6px}

/* VS window */
.vs{position:absolute;left:190px;top:124px;width:1667px;height:890px;background:#1f1f1f;color:#f1f1f1;display:flex;flex-direction:column;font-size:11.500px;box-shadow:0 0 18px rgba(0,0,0,.35);letter-spacing:-.13px}
.vs-title{height:33px;display:flex;align-items:center;flex:none;padding-left:13px}
.vs-logo{width:20px;height:20px;margin-right:12px}
.menu{display:flex;gap:20px;width:650px;flex:none}
.vs-search{width:220px;height:22px;background:#3f3f3f;display:flex;align-items:center;padding:0 6px 0 5px;color:#a8a8a8;flex:none}
.vs-search span{flex:1}
.find{width:14px;height:14px;color:#ddd}
.vs-proj{margin-left:26px;color:#a0a0a0;width:548px;flex:none}
.vs-av{width:20px;height:20px;border-radius:50%;background:#008272;color:#fff;font-size:10px;display:flex;align-items:center;justify-content:center;flex:none}
.vs-wc{width:12px;height:12px;margin-left:34px}
.vs-av + .vs-wc{margin-left:36px}
.vs-tools{height:33px;display:flex;align-items:center;flex:none;padding-left:14px;padding-bottom:4px}
.tb{width:22px;height:16px;color:#ddd;flex:none}
.tb.blue{color:#5aa9e6}
.tb.off,.cr.off{color:#5a5a5a}
.tb.hol{margin-left:1px}
.cr{width:13px;height:8px;color:#ccc;flex:none}
.ov{width:12px;height:8px;color:#ccc;flex:none;margin-top:8px}
.sep{width:1px;height:22px;background:#3f3f3f;margin:0 3.500px;flex:none}
.sep.tight{margin:0 3.500px;height:22px}
.grip{width:4px;height:22px;margin:0 2px 0 4px;background-image:radial-gradient(#666 .6px,transparent .7px);background-size:2px 2px;flex:none}
.grip.first{margin-left:0;margin-right:3px}
.tb-sql{width:22px;text-align:center;font-size:9px;color:#5a5a5a;flex:none}
.combo{height:22px;background:#3f3f3f;display:flex;align-items:center;padding-left:4px;margin-right:6px;flex:none}
.combo span{flex:1}
.c1{width:65px;margin-left:3px}
.c2{width:110px;margin-right:3px}
.dbg{margin-left:2px;width:136px;white-space:nowrap;flex:none}
.live{margin-left:auto;display:flex;align-items:center;gap:4px}
.live-i{width:16px;height:16px}
.fb{width:16px;height:16px;margin-left:24px;margin-right:21px}
.vs-body{flex:1;display:flex;gap:7px;padding:7px;min-height:0}

.col-left{width:199px;display:flex;flex-direction:column;flex:none}
.toolbox{height:766px;border:1px solid #3f3f3f;border-top:0;display:flex;flex-direction:column;background:#1e1e1e}
.pane-h{height:21px;background:#3f3f3f;display:flex;align-items:center;padding-left:4px;flex:none}
.pane-h span{flex:1}
.ph-c{width:9px;height:9px;color:#ddd;margin-right:7px}
.ph-p{width:9px;height:12px;color:#ddd;margin-right:7px}
.ph-x{width:11px;height:11px;color:#ddd;margin-right:5px}
.pane-s{height:22px;background:#3f3f3f;display:flex;align-items:center;padding-left:4px;color:#a8a8a8;flex:none}
.pane-s span{flex:1}
.pane-s .cr{width:8px;height:8px;margin:0 2px 0 1px}
.tbx-body{flex:1;display:flex;min-height:0;overflow:hidden}
.tbx-list{flex:1;padding:1px 5px 0 2px;overflow:hidden;min-width:0}
.tbx-g{height:19px;display:flex;align-items:center;padding-left:6px;white-space:nowrap}
.g-tri{width:8px;height:10px;margin-right:4px;color:#ddd}
.tbx-i{height:21px;display:flex;align-items:center;padding-left:18px;white-space:nowrap}
.tbx-i svg{width:16px;height:16px;margin-right:15px}
.tbx-i.on{background:#333336;height:20px;margin-bottom:1px;margin-top:1px}
.ic-t{font-size:7px;fill:#c8c8c8;text-anchor:middle;font-family:"Noto Sans",sans-serif}
.ic-t.sm{font-size:5px}
.ic-t.dk{font-size:11px;fill:#1e1e1e;font-weight:700}
.ic-t.dk2{font-size:7px;fill:#1e1e1e;font-weight:700}
.ic-t.lt2{font-size:8px;fill:#ddd;font-weight:700}
.tbx-sb{width:14px;margin-right:4px;margin-top:2px;display:flex;flex-direction:column;align-items:center;background:#262626;flex:none}
.sb-a{width:10px;height:10px;color:#999;margin:2px 0}
.sb-a.end{margin-top:auto;margin-bottom:4px}
.sb-thumb{width:9px;background:#444}
.t-toolbox{height:268px;margin-top:3px}
.tbx-sb.small{background:#2a2a2a;width:12px;margin:4px 3px 0 3px}
.t-sol{height:16px;margin-top:1px;background:#5a5a5a;width:10px}
.btabs{height:20px;display:flex;flex:none;font-size:11.300px}
.btab{padding:0 0 0 3px;display:flex;align-items:center;background:#2d2d2d;height:19px;white-space:nowrap}
.b-s{width:87px;margin-left:1px}
.btab.on{background:#1e1e1e;border:1px solid #3f3f3f;border-top:0;border-bottom:2px solid #9a9a9a;height:20px;padding:0 5px;margin-left:2px;width:53px}

.editor{flex:none;width:810px;display:flex;flex-direction:column}
.ed-tabs{height:22px;border-bottom:2px solid #333;display:flex;flex:none;align-items:flex-start;position:relative}
.ed-tab{height:20px;display:flex;align-items:center;padding-left:4px;white-space:nowrap}
.ed-tab.on{background:#3f3f3f;width:149px;height:20px;border-top:1px solid #555}
.ed-tab.on span{flex:1}
.tp{width:9px;height:9px;margin-right:8px}
.tx{width:10px;height:10px;margin-right:6px;color:#ddd}
.t-h{width:102px;background:#2d2d2d;margin-left:1px}
.t-c{width:116px;background:#2d2d2d;margin-left:1px}
.ed-c{width:9px;height:9px;color:#ddd;margin-left:auto;margin-top:5px}
.ed-g{width:12px;height:12px;margin-left:6px;margin-top:3px}
.ed-doc{flex:1;background:#1e1e1e;border:1px solid #2d2d2d;border-top:0;padding:14px 0 0 14px;overflow:hidden;min-height:0}
.form{width:300px;height:299px;position:relative;outline:1px dotted #808080;background:#d8e5f2;border-radius:4px 4px 0 0;padding:0 8px 7px;display:flex;flex-direction:column;color:#999;border:1px solid #90a6bd;border-bottom:0}
.form-title{height:31px;flex:none;background:linear-gradient(#bccfe3,#dae6f3);margin:0 -8px;padding:8px 0 0 12px;display:flex;align-items:center;font-size:12px;border-radius:4px 4px 0 0}
.form-ic{width:14px;height:14px;margin-right:5px}
.form-title span{width:158px}
.f-btn{width:32px;height:18px;border:1px solid #7a8ea5;border-radius:2px;background:linear-gradient(#eef3f8,#d1dbe6);margin-right:2px;display:flex;align-items:center;justify-content:center;flex:none}
.f-min{width:10px;height:4px;border:1px solid #444;background:#fff;margin-top:2px}
.f-max{width:8px;height:8px;border:1px solid #444;background:#fff}
.form-client{flex:1;background:#f0f0f0;display:flex;padding:91px 0 0 75px;color:#111}
.f-button{width:92px;height:23px;background:#e1e1e1;border:1px solid #adadad;display:flex;align-items:center;justify-content:center;font-size:11.500px}
.handle{position:absolute;width:6px;height:6px;background:#fff;border:1px solid #222;bottom:-5px}
.h1{left:147px}
.h2{right:-5px}

.col-right{flex:1;display:flex;flex-direction:column;gap:6px;min-width:0}
.sol{height:159px;flex:none;background:#1e1e1e;border-bottom:1px solid #3f3f3f;border-top:2px solid #6a5acd;display:flex;flex-direction:column}
.sol-h{height:19px;display:flex;align-items:center;padding-left:5px;flex:none;background:#1f1f1f}
.dots-grip{flex:1;height:5px;margin:0 10px 0 12px;background-image:radial-gradient(#555 .6px,transparent .7px);background-size:2px 2px}
.sol-t{height:28px;display:flex;align-items:center;flex:none;padding-left:5px;background:#1f1f1f}
.st{width:22px;height:16px;color:#5a5a5a;flex:none}
.st:not(.off){color:#ddd}
.st-on{width:22px;height:23px;border:1px solid #ccc;display:flex;align-items:center;justify-content:center;flex:none}
.st-on svg{width:16px;height:16px}
.pane-s.wide{padding-left:6px}
.sol-body{flex:1;display:flex;min-height:0;overflow:hidden}
.tree{flex:1;overflow:hidden;padding-top:2px}
.tr{height:19px;display:flex;align-items:center;white-space:nowrap}
.tr svg{width:16px;height:16px}
.tr .tri{width:8px;height:10px}
.r0{padding-left:15px}
.r0 svg{margin-right:5px}
.r1{padding-left:11px;background:#3f3482;border:1px solid #6a5acd}
.r1 .tri{width:8px;height:8px;margin-right:14px;color:#ddd}
.r1 svg:not(.tri){margin-right:4px}
.r1 b{font-weight:700}
.r2{padding-left:28px}
.r2 .tri{margin-right:14px;color:#ddd}
.r2 svg:not(.tri){margin-right:5px}
.props{flex:1;display:flex;flex-direction:column;background:#1e1e1e;border:1px solid #2d2d2d;border-top:0;min-height:0}
.pr-subj{height:24px;background:#3f3f3f;display:flex;align-items:center;padding-left:6px;flex:none}
.pr-subj b{font-weight:700;margin-right:6px}
.pr-subj span{flex:1}
.pr-subj .cr{width:8px;margin-right:3px}
.pr-t{height:26px;background:#1f1f1f;display:flex;align-items:center;padding:2px 0 0 4px;flex:none}
.st-on.pr{margin-left:1px}
.pr-grid{display:grid;grid-template-columns:288px 1fr;grid-auto-rows:19px;flex:none;border-top:2px solid #2b2b2b;border-left:16px solid #2b2b2b;height:78px}
.pr-cell{display:flex;align-items:center;padding-left:4px;border-bottom:1px solid #333;white-space:nowrap;overflow:hidden}
.pr-cell.v{border-left:1px solid #333}
.pr-cell.sel{background:#2b2b2b;border-bottom-color:#2b2b2b;margin-left:-1px;padding-left:5px}
.dis{color:#808080}
.pr-desc{margin-top:auto;height:63px;border-top:1px solid #333;padding:6px 6px;display:flex;flex-direction:column;line-height:18.500px}
.pr-desc b{font-weight:700}

.vs-status{height:24px;background:#444;display:flex;align-items:center;flex:none;padding-left:7px}
.ready-i{width:16px;height:14px;margin-right:6px}
.st-r{margin-left:auto;display:flex;align-items:center}
.st-up{width:10px;height:14px;margin-right:10px}
.st-r .cr{width:10px;margin-left:5px;color:#eee}
.st-git{width:16px;height:16px;margin-left:20px;margin-right:6px}
.st-bell{width:14px;height:16px;margin-left:22px}
.st-grip{width:10px;height:10px;margin-left:24px;margin-right:2px;margin-top:8px}

/* resource dialog */
.dialog{position:absolute;left:496px;top:104px;width:420px;height:294px;background:#f0f0f0;color:#000;display:flex;flex-direction:column;font-size:11.500px;border-left:1px solid #777;border-bottom:1px solid #555}
.dlg-title{height:30px;background:#fff;display:flex;align-items:center;padding:0 9px 2px 7px;flex:none}
.dlg-title span{flex:1}
.dlg-x{width:14px;height:14px;color:#111}
.dlg-body{flex:1;display:flex;padding:14px 13px 0 10px;min-height:0}
.dlg-left{width:278px;flex:none;margin-right:15px;display:flex;flex-direction:column}
.dlg-label{height:18px;line-height:12px}
.dlg-tree{height:220px;position:relative;background:#fff;border:1px solid #fff;border-top:2px solid #333;border-left:1px solid #444;overflow:hidden;display:grid;grid-template-columns:1fr 16px;grid-template-rows:1fr 15px}
.rt{overflow:hidden;min-width:0}
.rt li{height:16px;display:flex;align-items:center;white-space:nowrap;position:relative}
.rt-r{padding-left:27px}
.rt-c{padding-left:49px}
.rt-c::before{content:"";position:absolute;left:36px;top:8px;width:9px;border-top:1px dotted #888}
.rt-c::after{content:"";position:absolute;left:36px;top:0;height:16px;border-left:1px dotted #888}
.ri{width:14px;height:14px;margin-right:5px;flex:none}
.rt-sel{background:#0078d7;color:#fff;outline:1px dotted #e08a00;outline-offset:-1px;padding:0 3px 0 4px;height:16px;line-height:16px;margin-left:-3px}
.plus{position:absolute;left:10px;top:3px;width:9px;height:9px;border:1px solid #555;font-style:normal;font-size:9px;line-height:7px;text-align:center;color:#1a5fb4;background:#fff}
.plus::after{content:"";position:absolute;left:8px;top:3px;width:6px;border-top:1px dotted #888}
.rt-v{background:#f0f0f0;display:flex;flex-direction:column;align-items:center}
.rt-v svg{width:12px;height:12px;margin-top:3px;flex:none}
.rt-v svg.end{margin-top:auto;margin-bottom:3px}
.rt-vt{width:16px;height:111px;background:#cdcdcd;margin-top:3px;flex:none}
.rt-h{grid-column:1/3;background:#f0f0f0;display:flex;align-items:center;padding-right:19px}
.rt-h svg{width:12px;height:12px;margin-left:3px;flex:none}
.rt-ht{height:15px;width:217px;background:#cdcdcd;margin:0 8px 0 3px;flex:none}
.dlg-btns{display:flex;flex-direction:column;gap:6px;width:102px;flex:none;margin-top:-1px}
.dbtn{height:24px;background:#e1e1e1;border:1px solid #adadad;font:inherit;color:#000;padding:0}
.dbtn.def{border:2px solid #0078d7}

/* taskbar */
.taskbar{height:40px;flex:none;background:linear-gradient(90deg,#1d3642,#1f3340 50%,#1d2f45);display:flex;align-items:center;position:relative;z-index:2}
.win{width:17px;height:17px;margin-left:16px;margin-right:15px}
.tk-search{width:344px;height:40px;background:#f0f0f0;border:1px solid #c8c8c8;border-width:1px 0;display:flex;align-items:center;padding-left:12px;font-size:15px;color:#222;letter-spacing:-.25px}
.tk-s{width:18px;height:18px;margin-right:9px}
.tk-i{width:18px;height:18px;flex:none}
.ring{margin-left:15px}
.view{margin-left:30px}
.tk-app{width:49px;height:40px;display:flex;align-items:center;justify-content:center;position:relative;flex:none}
.view + .tk-app{margin-left:18px}
.tk-app svg{width:26px;height:26px}
.tk-app.run::after{content:"";position:absolute;left:4px;right:4px;bottom:0;height:2px;background:#76b9ed}
.tk-app.act{background:#4a5f6a}
.tk-app.act::after{left:0;right:0}
.tray{margin-left:auto;display:flex;align-items:center;color:#fff;height:40px}
.sun{width:18px;height:19px;border-radius:50%;background:linear-gradient(#ffd24a,#ff9f1a)}
.wx{font-size:13.500px;margin-left:11px;letter-spacing:-.3px}
.tr-i{width:16px;height:16px;margin-left:8px}
.tr-i.first{margin-left:19px}
.clock{width:62px;margin-left:6px;display:flex;flex-direction:column;align-items:center;font-size:12px;line-height:21px;letter-spacing:-.3px}
.note{width:18px;height:18px;margin-left:11px;margin-right:19px}
.peek{width:1px;height:40px;background:#5a6a78;margin-right:4px}
```
